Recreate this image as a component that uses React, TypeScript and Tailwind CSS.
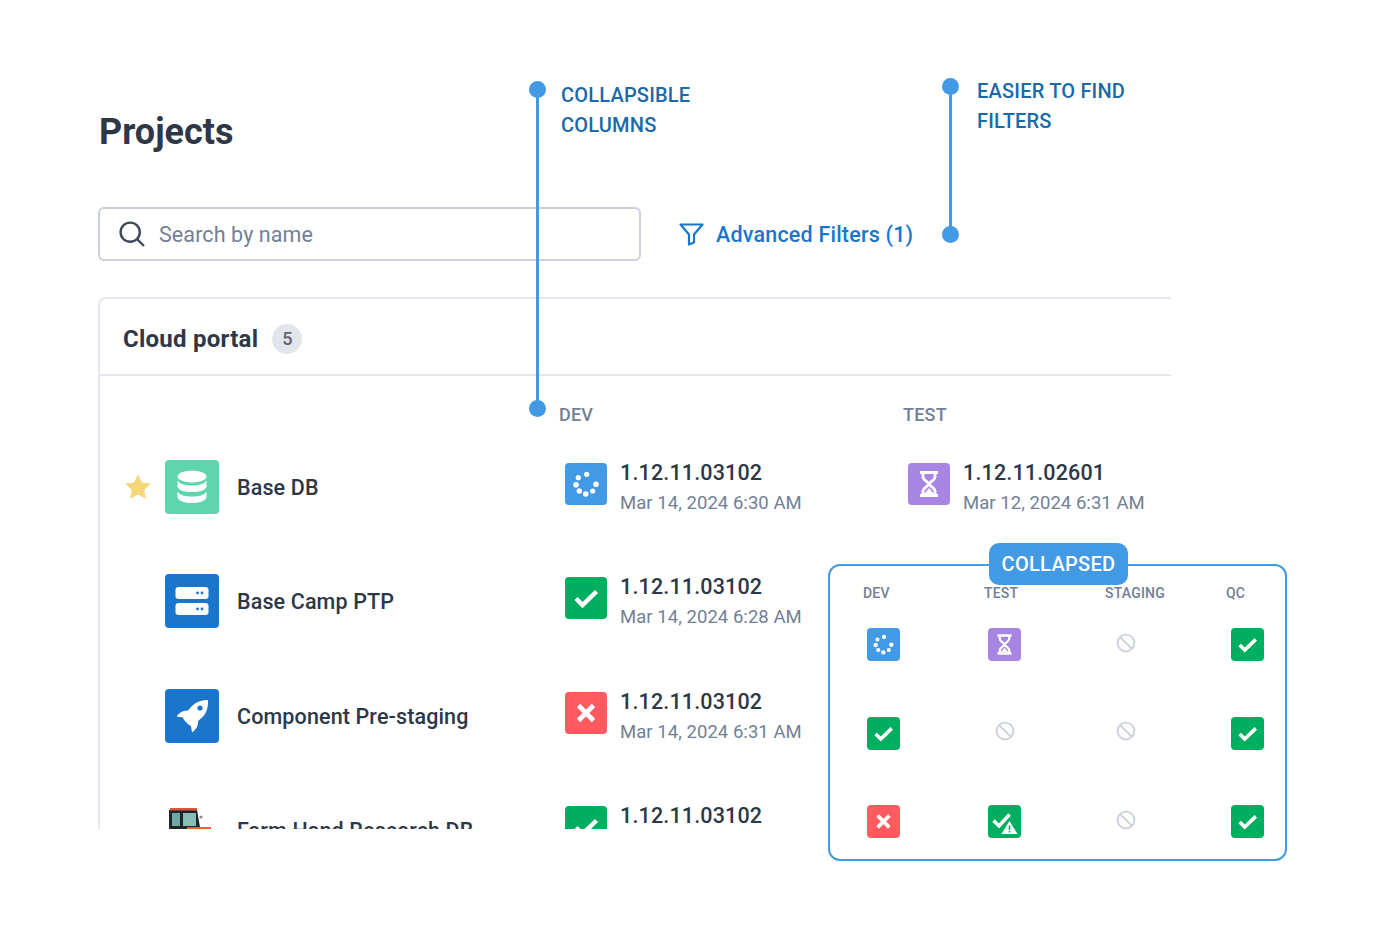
import React from "react";

const Spinner = ({ s }: { s: number }) => (
  <svg width={s} height={s} viewBox="0 0 42 42">
    {[
      [21.7, 11.3, 2.6], [13.3, 14.7, 2.6], [11, 21.7, 2.8], [14.3, 28, 2.7], [20.7, 31, 2.8], [27.7, 28, 2.6], [31, 21.3, 2.8],
    ].map(([x, y, r], i) => <circle key={i} cx={x} cy={y} r={r} fill="#fff" />)}
  </svg>
);
const Check = ({ s }: { s: number }) => (
  <svg width={s} height={s} viewBox="0 0 42 42" fill="none">
    <path d="M11 21.5 L17.5 28 L31.5 14.5" stroke="#fff" strokeWidth="4.5" />
  </svg>
);
const Cross = ({ s }: { s: number }) => (
  <svg width={s} height={s} viewBox="0 0 42 42" fill="none">
    <path d="M13.5 13.5 L28.5 28.5 M28.5 13.5 L13.5 28.5" stroke="#fff" strokeWidth="4.6" />
  </svg>
);
const Glass = ({ s }: { s: number }) => (
  <svg width={s} height={s} viewBox="0 0 42 42" fill="none">
    <path d="M12 9.5H30M12 32.5H30" stroke="#fff" strokeWidth="3.2" />
    <path d="M15 10V14C15 17 21 19.5 21 21C21 22.5 15 25 15 28V32M27 10V14C27 17 21 19.5 21 21C21 22.5 27 25 27 28V32" stroke="#fff" strokeWidth="2.8" />
    <path d="M16 31L21 25L26 31Z" fill="#fff" />
  </svg>
);
const CheckWarn = ({ s }: { s: number }) => (
  <svg width={s} height={s} viewBox="0 0 33 33" fill="none">
    <path d="M5.5 15.5 L11 21 L21.5 9.5" stroke="#fff" strokeWidth="3.4" />
    <path d="M21.5 16 L29.5 29 H13.5 Z" fill="#fff" />
    <path d="M21.5 20.5V25M21.5 26V27.6" stroke="#00ae60" strokeWidth="1.6" />
  </svg>
);
const Ban = () => (
  <svg width="20" height="20" viewBox="0 0 20 20" fill="none" stroke="#cbd0dc" strokeWidth="1.9">
    <circle cx="10" cy="10" r="8.4" />
    <path d="M3.8 3.8 L16.2 16.2" />
  </svg>
);

const Db = () => (
  <svg width="54" height="54" viewBox="0 0 54 54" fill="#fff">
    <ellipse cx="27" cy="16.5" rx="14.5" ry="6" />
    <path d="M12.5 20.5C15 24.5 20 25.5 27 25.5C34 25.5 39 24.5 41.5 20.5V27C39.5 31 34 32 27 32C20 32 14.5 31 12.5 27Z" />
    <path d="M12.5 31.5C15 35.5 20 36.5 27 36.5C34 36.5 39 35.5 41.5 31.5V37.5C39.5 41.5 34 43 27 43C20 43 14.5 41.5 12.5 37.5Z" />
  </svg>
);
const Server = () => (
  <svg width="54" height="54" viewBox="0 0 54 54">
    <rect x="10.5" y="13" width="33" height="12" rx="3" fill="#fff" />
    <rect x="10.5" y="29" width="33" height="12" rx="3" fill="#fff" />
    {[19, 35].map((y) => (
      <g key={y} fill="#1976cc">
        <circle cx="32.5" cy={y} r="1.4" />
        <circle cx="37" cy={y} r="1.4" />
      </g>
    ))}
  </svg>
);
const Rocket = () => (
  <svg width="54" height="54" viewBox="0 0 54 54">
    <path d="M43 11C36 11 30 13.5 26 18L23 21.5C19 21 14.5 23 11.5 27.5L18 28.5L19 31L24 36L26 37L27 43.5C31.5 40.5 33.5 36 33 32L36.5 29C41 25 43.5 19 43 11Z" fill="#fff" />
    <circle cx="35" cy="19" r="2.6" fill="#1976cc" />
  </svg>
);
const Tractor = () => (
  <svg width="54" height="54" viewBox="0 0 54 54" className="block">
    <path d="M4 7H32L35 24L38 27H4Z" fill="#22262b" />
    <path d="M5 5H32V7.5H5Z" fill="#d9573a" />
    <path d="M7 10H15V23H7Z" fill="#6fa9a5" />
    <path d="M18 10H31V23H18Z" fill="#86bfb7" />
    <path d="M22 24H46V30H4V27H22Z" fill="#e8622d" />
    <circle cx="36" cy="14" r="1.5" fill="#8a8a8a" />
  </svg>
);

const tile = "flex items-center justify-center rounded-[4px] shrink-0";

type S = "spin" | "ok" | "bad" | "wait";
const bg: Record<S, string> = { spin: "bg-[#4299e4]", ok: "bg-[#00ae60]", bad: "bg-[#ff5a5f]", wait: "bg-[#a884e3]" };

const Status = ({ v, d, s }: { v: string; d: string; s: S }) => (
  <div className="flex items-start gap-[13px] pt-[33px] pl-[5px]">
    <div className={`${tile} ${bg[s]} w-[42px] h-[42px]`}>
      {s === "spin" && <Spinner s={42} />}
      {s === "ok" && <Check s={42} />}
      {s === "bad" && <Cross s={42} />}
      {s === "wait" && <Glass s={42} />}
    </div>
    <div className="-mt-[5px]">
      <div className="text-[21.5px] leading-[30px] font-medium tracking-[0.16px] text-[#2d3748] whitespace-nowrap">{v}</div>
      <div className="text-[18.5px] leading-[30px] tracking-[0.05px] text-[#718096] whitespace-nowrap">{d}</div>
    </div>
  </div>
);

const Row = ({ star, iconBg, icon, name, dev, test }: { star?: boolean; iconBg: string; icon: React.ReactNode; name: string; dev: { v: string; d: string; s: S }; test?: { v: string; d: string; s: S } }) => (
  <div className="flex h-[114.3px] shrink-0">
    <div className="w-[460px] flex items-start pt-[30px] shrink-0">
      <div className="w-[65px] flex justify-end pr-[14px] pt-[14px] shrink-0">
        {star && (
          <svg width="26" height="26" viewBox="0 0 26 26">
            <path d="M13 1.5L16.6 9L24.8 10.1L18.8 15.8L20.3 24L13 20L5.7 24L7.2 15.8L1.2 10.1L9.4 9Z" fill="#f5d77a" stroke="#f5d77a" strokeLinejoin="round" />
          </svg>
        )}
      </div>
      <div className={`${tile} ${iconBg} w-[54px] h-[54px]`}>{icon}</div>
      <div className="ml-[18px] pt-[1px] text-[21.5px] leading-[54px] font-medium tracking-[0.13px] text-[#2d3748] whitespace-nowrap">{name}</div>
    </div>
    <div className="w-[343px] shrink-0">
      <Status {...dev} />
    </div>
    {test && (
      <div className="w-[268px] shrink-0">
        <Status {...test} />
      </div>
    )}
  </div>
);

const Cell = ({ k }: { k: string }) => {
  if (k === "ban") return <div className="w-[33px] h-[33px] flex items-center justify-center -mt-[2px]"><Ban /></div>;
  const c = k === "warn" ? "ok" : (k as S);
  return (
    <div className={`${tile} ${bg[c]} w-[33px] h-[33px]`}>
      {k === "spin" && <Spinner s={33} />}
      {k === "ok" && <Check s={33} />}
      {k === "bad" && <Cross s={33} />}
      {k === "wait" && <Glass s={33} />}
      {k === "warn" && <CheckWarn s={33} />}
    </div>
  );
};

const Dot = ({ className }: { className: string }) => <div className={`absolute w-[17px] h-[17px] rounded-full bg-[#4299e4] ${className}`} />;

export default function App() {
  const rows = [
    ["spin", "wait", "ban", "ok"],
    ["ok", "ban", "ban", "ok"],
    ["bad", "warn", "ban", "ok"],
  ];
  return (
    <div className="relative w-[1376px] h-[934px] bg-white overflow-hidden font-['Roboto',sans-serif]">
      <div className="pl-[98px] pt-[110px]">
        <h1 className="text-[36px] leading-[43px] font-bold text-[#2d3748] pl-[1px] pt-[1px] -mb-[1px]">Projects</h1>

        <div className="flex items-center mt-[54px]">
          <div className="w-[543px] h-[54px] border-2 border-[#cbd0dc] rounded-[6px] flex items-center pl-[19px] gap-[14px]">
            <svg width="26" height="26" viewBox="0 0 26 26" fill="none" stroke="#3f4a59" strokeWidth="2.4">
              <circle cx="11.2" cy="11.2" r="9.6" />
              <path d="M18 18L25 25" />
            </svg>
            <span className="text-[21.5px] tracking-[0.1px] text-[#718096] pt-[2px]">Search by name</span>
          </div>
          <div className="flex items-center ml-[38px]">
            <svg width="25" height="23" viewBox="0 0 25 23" fill="none" stroke="#1976cc" strokeWidth="2.2">
              <path d="M1.5 1.5H23.5L15 11.5V19.5L10 21.5V11.5Z" strokeLinejoin="round" />
            </svg>
            <span className="ml-[12px] pt-[2px] text-[21.5px] font-medium tracking-[0.2px] text-[#1976cc] whitespace-nowrap">Advanced Filters (1)</span>
          </div>
        </div>

        <div className="mt-[36px] w-[1073px] h-[532px] border-t-2 border-l-2 border-[#e6e8ef] rounded-tl-[8px] overflow-hidden">
          <div className="h-[77px] border-b-2 border-[#e6e8ef] flex items-center pl-[23px] pt-[4px]">
            <span className="text-[24px] font-bold tracking-[0.25px] text-[#2d3748]">Cloud portal</span>
            <span className="ml-[14px] w-[30px] h-[30px] rounded-full bg-[#e2e5ea] flex items-center justify-center text-[18px] font-medium text-[#5a6678]">5</span>
          </div>
          <div className="flex h-[54px] pt-[26px] text-[18px] leading-[26px] font-medium tracking-[0.2px] text-[#718096]">
            <div className="w-[459px] shrink-0" />
            <div className="w-[344px] shrink-0">DEV</div>
            <div>TEST</div>
          </div>
          <Row star iconBg="bg-[#5dd6ad]" icon={<Db />} name="Base DB" dev={{ v: "1.12.11.03102", d: "Mar 14, 2024 6:30 AM", s: "spin" }} test={{ v: "1.12.11.02601", d: "Mar 12, 2024 6:31 AM", s: "wait" }} />
          <Row iconBg="bg-[#1976cc]" icon={<Server />} name="Base Camp PTP" dev={{ v: "1.12.11.03102", d: "Mar 14, 2024 6:28 AM", s: "ok" }} />
          <Row iconBg="bg-[#1976cc]" icon={<Rocket />} name="Component Pre-staging" dev={{ v: "1.12.11.03102", d: "Mar 14, 2024 6:31 AM", s: "bad" }} />
          <Row iconBg="bg-white" icon={<Tractor />} name="Farm Hand Research DB" dev={{ v: "1.12.11.03102", d: "Mar 14, 2024 6:30 AM", s: "ok" }} />
        </div>
      </div>

      {/* annotations */}
      <div className="absolute left-[536px] top-[89px] w-[2.5px] h-[320px] bg-[#4299e4]" />
      <Dot className="left-[529px] top-[81px]" />
      <Dot className="left-[529px] top-[400px]" />
      <div className="absolute left-[561px] top-[80px] text-[20px] leading-[30px] font-medium tracking-[0.2px] text-[#1a69a8]">
        COLLAPSIBLE<br />COLUMNS
      </div>
      <div className="absolute left-[949px] top-[86px] w-[2.5px] h-[148px] bg-[#4299e4]" />
      <Dot className="left-[942px] top-[78px]" />
      <Dot className="left-[942px] top-[226px]" />
      <div className="absolute left-[977px] top-[76px] text-[20px] leading-[30px] font-medium tracking-[0.2px] text-[#1a69a8]">
        EASIER TO FIND<br />FILTERS
      </div>

      {/* collapsed panel */}
      <div className="absolute left-[828px] top-[564px] w-[459px] h-[297px] bg-white border-2 border-[#4299e4] rounded-[12px]">
        <div className="absolute left-[159px] -top-[23px] w-[139px] h-[42px] bg-[#4299e4] rounded-[10px] flex items-center justify-center text-[20px] font-medium tracking-[0.3px] text-white">COLLAPSED</div>
        <div className="grid grid-cols-[121px_121px_121px_121px] pl-[33px] pt-[18px] text-[14px] leading-[18px] font-medium tracking-[0.2px] text-[#718096]">
          <div>DEV</div>
          <div>TEST</div>
          <div>STAGING</div>
          <div>QC</div>
        </div>
        <div className="flex flex-col gap-[55.5px] pl-[37px] pt-[26px]">
          {rows.map((r, i) => (
            <div key={i} className="grid grid-cols-[121.3px_121.3px_121.3px_121.3px]">
              {r.map((k, j) => (
                <Cell key={j} k={k} />
              ))}
            </div>
          ))}
        </div>
      </div>
    </div>
  );
}
